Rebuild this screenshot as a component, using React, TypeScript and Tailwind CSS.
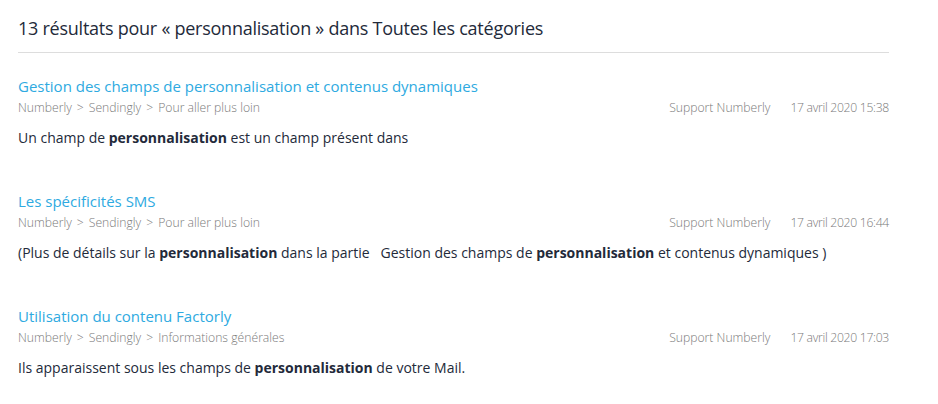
const results = [
  {
    title: "Gestion des champs de personnalisation et contenus dynamiques",
    path: ["Numberly", "Sendingly", "Pour aller plus loin"],
    date: "17 avril 2020 15:38",
    body: (
      <>
        Un champ de <strong className="font-bold">personnalisation</strong> est un champ présent dans
      </>
    ),
  },
  {
    title: "Les spécificités SMS",
    path: ["Numberly", "Sendingly", "Pour aller plus loin"],
    date: "17 avril 2020 16:44",
    body: (
      <>
        (Plus de détails sur la <strong className="font-bold">personnalisation</strong> dans la partie{"\u00a0\u00a0 "}Gestion
        des champs de <strong className="font-bold">personnalisation</strong> et contenus dynamiques )
      </>
    ),
  },
  {
    title: "Utilisation du contenu Factorly",
    path: ["Numberly", "Sendingly", "Informations générales"],
    date: "17 avril 2020 17:03",
    body: (
      <>
        Ils apparaissent sous les champs de <strong className="font-bold">personnalisation</strong> de votre Mail.
      </>
    ),
  },
];

export default function App() {
  return (
    <div
      className="min-h-[404px] bg-white pl-[18px] pt-4 text-[#232a3a]"
      style={{ fontFamily: '"Open Sans", "Liberation Sans", sans-serif' }}
    >
      <div className="w-[871px]">
        <h1 className="border-b border-[#dddddd] pb-3 text-[18px] font-medium leading-6 tracking-[-0.25px]">
          13 résultats pour « personnalisation » dans Toutes les catégories
        </h1>
        <ul className="pt-[22px]">
          {results.map((r) => (
            <li key={r.title} className="pb-[41px]">
              <a className="block text-[15px] leading-[22px] text-[#2eaae1]">{r.title}</a>
              <div className="mt-px flex items-center justify-between text-[12.2px] font-light leading-5 text-[#7a7a7a]">
                <ol className="flex items-center">
                  {r.path.map((p, i) => (
                    <li key={p} className="flex items-center">
                      {i > 0 && <span className="mx-[5px]">&gt;</span>}
                      {p}
                    </li>
                  ))}
                </ol>
                <div className="flex items-center gap-[20px]">
                  <span>Support Numberly</span>
                  <span className="tracking-[-0.3px]">{r.date}</span>
                </div>
              </div>
              <p className="mt-[9px] text-[14px] leading-[22px]">{r.body}</p>
            </li>
          ))}
        </ul>
      </div>
    </div>
  );
}
